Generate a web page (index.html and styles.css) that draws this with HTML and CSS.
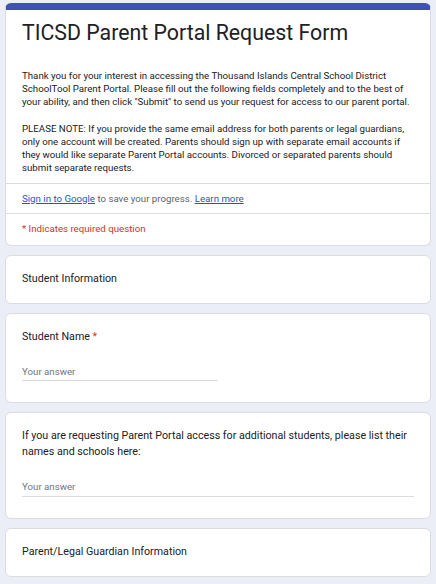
FILE: index.html
```html
<!DOCTYPE html>
<html>
  <head>
    <meta charset="UTF-8" />
    <meta name="viewport" content="width=device-width, initial-scale=1.0" />
    <title>TICSD Parent Portal Request Form</title>
    <link rel="stylesheet" href="styles.css">
  </head>
  <body>
    <main class="form">
      <section class="card header-card">
        <div class="header-top">
          <h1 class="form-title">TICSD Parent Portal Request Form</h1>
          <p class="form-desc">
            Thank you for your interest in accessing the Thousand Islands Central School District
            SchoolTool Parent Portal. Please fill out the following fields completely and to the best of
            your ability, and then click "Submit" to send us your request for access to our parent portal.
            <br><br>
            PLEASE NOTE: If you provide the same email address for both parents or legal guardians,
            only one account will be created. Parents should sign up with separate email accounts if
            they would like separate Parent Portal accounts. Divorced or separated parents should
            submit separate requests.
          </p>
        </div>
        <div class="signin-row">
          <a href="#">Sign in to Google</a> to save your progress. <a href="#">Learn more</a>
        </div>
        <div class="required-row">* Indicates required question</div>
      </section>

      <section class="card">
        <h2 class="section-title">Student Information</h2>
      </section>

      <section class="card question">
        <div class="question-text">Student Name <span class="req">*</span></div>
        <input class="answer short" type="text" placeholder="Your answer">
      </section>

      <section class="card question">
        <div class="question-text">If you are requesting Parent Portal access for additional students, please list their names and schools here:</div>
        <input class="answer" type="text" placeholder="Your answer">
      </section>

      <section class="card">
        <h2 class="section-title">Parent/Legal Guardian Information</h2>
      </section>
    </main>
  </body>
</html>
```

FILE: styles.css
```css
* {
  box-sizing: border-box;
  margin: 0;
  padding: 0;
}

html,
body {
  overflow: hidden;
}

body {
  font-family: Roboto, "Noto Sans", Arial, sans-serif;
  color: #202124;
  background-color: #ebedf7;
}

.form {
  display: flex;
  flex-direction: column;
  gap: 9px;
  padding: 3px 5px 0;
}

.card {
  background-color: #fff;
  border: 1px solid #dadce0;
  border-radius: 6px;
  padding: 15px 16px 16px;
}

.header-card {
  padding: 0;
  border-top: 7px solid #3f51b5;
  overflow: hidden;
}

.header-top {
  padding: 9px 16px 8px;
}

.form-title {
  font-size: 21.3px;
  font-weight: 400;
  line-height: 28px;
  margin-bottom: 22px;
}

.form-desc {
  font-size: 9.7px;
  line-height: 13.2px;
}

.signin-row {
  border-top: 1px solid #dadce0;
  padding: 8px 16px 8px;
  font-size: 9.7px;
  line-height: 13px;
  color: #5f6368;
}

.signin-row a {
  color: #1a57c9;
}

.required-row {
  border-top: 1px solid #dadce0;
  padding: 8px 16px 10px;
  font-size: 9.7px;
  line-height: 13px;
  color: #d93025;
}

.section-title {
  font-size: 10.7px;
  font-weight: 400;
  line-height: 16px;
}

.question {
  padding-bottom: 21px;
}

.question-text {
  font-size: 10.7px;
  line-height: 15.7px;
  margin-bottom: 20px;
}

.req {
  color: #d93025;
}

.answer {
  display: block;
  width: 100%;
  height: 17px;
  padding-bottom: 2px;
  border: none;
  border-bottom: 1px solid #dadce0;
  outline: none;
  font-family: inherit;
  font-size: 9.7px;
  color: #202124;
  background: transparent;
}

.answer::placeholder {
  color: #70757a;
}

.answer.short {
  width: 50%;
}
```
